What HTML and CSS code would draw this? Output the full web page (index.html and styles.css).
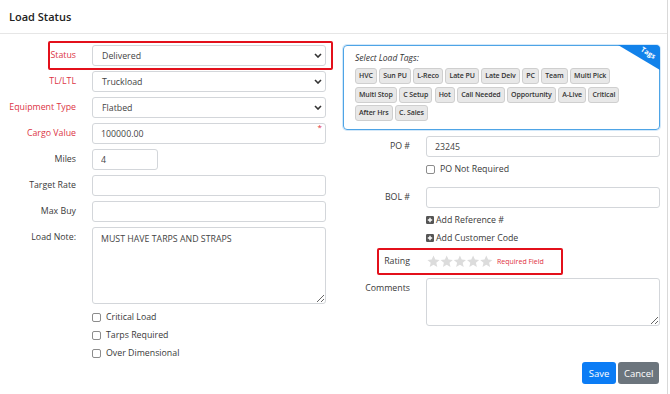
FILE: index.html
```html
<!DOCTYPE html>
<html lang="en">
  <head>
    <meta charset="UTF-8" />
    <meta name="viewport" content="width=device-width, initial-scale=1.0" />
    <title>Load Status</title>
    <link rel="stylesheet" href="styles.css">
  </head>
  <body>
    <div class="modal">
      <div class="modal-header">
        <h5>Load Status</h5>
      </div>

      <div class="modal-body">
        <div class="col-left">
          <div class="row marked">
            <label class="req">Status</label>
            <div class="control select">
              <span>Delivered</span>
              <svg class="chev" width="8" height="5" viewBox="0 0 8 5"><path d="M1 1l3 3 3-3" /></svg>
            </div>
          </div>
          <div class="row">
            <label class="req">TL/LTL</label>
            <div class="control select">
              <span>Truckload</span>
              <svg class="chev" width="8" height="5" viewBox="0 0 8 5"><path d="M1 1l3 3 3-3" /></svg>
            </div>
          </div>
          <div class="row">
            <label class="req">Equipment Type</label>
            <div class="control select">
              <span>Flatbed</span>
              <svg class="chev" width="8" height="5" viewBox="0 0 8 5"><path d="M1 1l3 3 3-3" /></svg>
            </div>
          </div>
          <div class="row">
            <label class="req">Cargo Value</label>
            <div class="field">
              <input class="control" type="text" value="100000.00" />
              <span class="star-req">*</span>
            </div>
          </div>
          <div class="row">
            <label>Miles</label>
            <input class="control short" type="text" value="4" />
          </div>
          <div class="row">
            <label>Target Rate</label>
            <input class="control" type="text" value="" />
          </div>
          <div class="row">
            <label>Max Buy</label>
            <input class="control" type="text" value="" />
          </div>
          <div class="row">
            <label>Load Note:</label>
            <textarea class="control note">MUST HAVE TARPS AND STRAPS</textarea>
          </div>

          <div class="checks">
            <label class="check"><input type="checkbox" /> Critical Load</label>
            <label class="check"><input type="checkbox" /> Tarps Required</label>
            <label class="check"><input type="checkbox" /> Over Dimensional</label>
          </div>
        </div>

        <div class="col-right">
          <div class="tags-box">
            <div class="tags-title">Select Load Tags:</div>
            <div class="tags">
              <span class="tag">HVC</span>
              <span class="tag">Sun PU</span>
              <span class="tag">L-Reco</span>
              <span class="tag">Late PU</span>
              <span class="tag">Late Delv</span>
              <span class="tag">PC</span>
              <span class="tag">Team</span>
              <span class="tag">Multi Pick</span>
              <span class="tag">Multi Stop</span>
              <span class="tag">C Setup</span>
              <span class="tag">Hot</span>
              <span class="tag">Call Needed</span>
              <span class="tag">Opportunity</span>
              <span class="tag">A-Live</span>
              <span class="tag">Critical</span>
              <span class="tag">After Hrs</span>
              <span class="tag">C. Sales</span>
            </div>
            <svg class="ribbon" width="42" height="25" viewBox="0 0 42 25">
              <path d="M0 0H38Q42 0 42 4V25Z" fill="#1282ea" />
              <text x="29" y="10" transform="rotate(32 29 10)" text-anchor="middle">Tags</text>
            </svg>
          </div>

          <div class="row po">
            <label>PO #</label>
            <input class="control" type="text" value="23245" />
          </div>
          <div class="row">
            <span></span>
            <label class="check"><input type="checkbox" /> PO Not Required</label>
          </div>
          <div class="row bol">
            <label>BOL #</label>
            <input class="control" type="text" value="" />
          </div>
          <div class="row">
            <span></span>
            <div class="links">
              <a class="add"><svg width="8" height="8" viewBox="0 0 8 8"><rect width="8" height="8" rx="1.2" fill="#555" /><path d="M4 1.8v4.4M1.8 4h4.4" stroke="#fff" stroke-width="1.4" /></svg>Add Reference #</a>
              <a class="add"><svg width="8" height="8" viewBox="0 0 8 8"><rect width="8" height="8" rx="1.2" fill="#555" /><path d="M4 1.8v4.4M1.8 4h4.4" stroke="#fff" stroke-width="1.4" /></svg>Add Customer Code</a>
            </div>
          </div>
          <div class="row rating marked">
            <label>Rating</label>
            <div class="stars">
              <svg width="66" height="13" viewBox="0 0 66 13">
                <path id="s" d="M6.5 0.5l1.8 4 4.3.4-3.3 2.9 1 4.2-3.8-2.3-3.8 2.3 1-4.2-3.3-2.9 4.3-.4z" fill="#dcdcdc" />
                <use href="#s" x="13.2" />
                <use href="#s" x="26.4" />
                <use href="#s" x="39.6" />
                <use href="#s" x="52.8" />
              </svg>
              <span class="req-note">Required Field</span>
            </div>
          </div>
          <div class="row comments">
            <label>Comments</label>
            <textarea class="control comment-box"></textarea>
          </div>

          <div class="actions">
            <button class="btn save">Save</button>
            <button class="btn cancel">Cancel</button>
          </div>
        </div>
      </div>
    </div>
  </body>
</html>
```

FILE: styles.css
```css
* {
  box-sizing: border-box;
}

body {
  margin: 0;
  font-family: "Open Sans", "Noto Sans", Arial, sans-serif;
  font-size: 8.8px;
  color: #333;
  background-color: #fff;
}

.modal {
  width: 668px;
  height: 394px;
  border-right: 1px solid #d9d9d9;
}

.modal-header {
  height: 34px;
  padding-left: 9px;
  border-bottom: 1px solid #e6e6e6;
  display: flex;
  align-items: center;
}

.modal-header h5 {
  margin: 0;
  font-size: 11px;
  font-weight: 600;
  color: #222;
}

.modal-body {
  display: flex;
  gap: 17px;
  padding-top: 11px;
}

.col-left {
  width: 326px;
}

.col-right {
  width: 317px;
}

.row {
  position: relative;
  display: grid;
  grid-template-columns: 76px 1fr;
  column-gap: 16px;
  align-items: start;
  margin-bottom: 5px;
}

.col-right .row {
  grid-template-columns: 67px 1fr;
  margin-bottom: 0;
}

.row > label {
  text-align: right;
  line-height: 21px;
  color: #3a3a3a;
}

.row > label.req {
  color: #dc3545;
}

/* red annotation boxes */
.marked::before {
  content: "";
  position: absolute;
  left: 48px;
  right: -7px;
  top: -4px;
  bottom: -4px;
  border: 2px solid #e3101b;
  border-radius: 2px;
}

.control {
  width: 100%;
  height: 21px;
  padding: 0 8px;
  border: 1px solid #d3d6da;
  border-radius: 3px;
  font: inherit;
  color: #444;
  background-color: #fff;
  outline: none;
}

.select {
  display: flex;
  align-items: center;
  justify-content: space-between;
  padding-left: 9px;
  padding-right: 3px;
}

.chev {
  fill: none;
  stroke: #333;
  stroke-width: 1.6;
}

.field {
  position: relative;
}

.star-req {
  position: absolute;
  right: 4px;
  top: 0;
  color: #e0303e;
  font-size: 8px;
  line-height: 8px;
}

.control.short {
  width: 66px;
}

.note {
  height: 77px;
  padding-top: 5px;
  resize: vertical;
  display: block;
}

.checks {
  margin-left: 92px;
  margin-top: -1px;
}

.check {
  display: flex;
  align-items: center;
  gap: 5px;
  height: 18px;
  color: #3a3a3a;
}

.check input {
  appearance: none;
  width: 9px;
  height: 9px;
  margin: 0;
  border: 1px solid #8c8c8c;
  border-radius: 2px;
}

.tags-box {
  position: relative;
  height: 85px;
  padding: 5px 36px 0 11px;
  border: 1px solid #4ea4e6;
  border-radius: 4px;
  box-shadow: 0 0 0 1px rgba(78, 164, 230, 0.25);
  margin-bottom: 6px;
}

.tags-title {
  font-style: italic;
  font-size: 8.5px;
  line-height: 13px;
  margin-bottom: 4px;
}

.tags {
  display: flex;
  flex-wrap: wrap;
  gap: 2.5px 2.5px;
}

.tag {
  height: 16px;
  padding: 0 3px;
  border: 1px solid #cfcfcf;
  border-radius: 3px;
  background-color: #e8e8e8;
  font-size: 7px;
  font-weight: 600;
  letter-spacing: -0.1px;
  line-height: 14px;
  color: #333;
}

.ribbon {
  position: absolute;
  top: -1px;
  right: -1px;
}

.ribbon text {
  fill: #fff;
  font-size: 7px;
  font-weight: 700;
}

.col-right .check {
  height: 20px;
  margin-top: 2px;
}

.bol {
  margin-top: 8px;
}

.links {
  padding-top: 3px;
}

.add {
  display: flex;
  align-items: center;
  gap: 2px;
  height: 18px;
  color: #3a3a3a;
}

.rating {
  margin-top: 4px;
  height: 20px;
}

.rating > label {
  line-height: 20px;
}

.rating.marked::before {
  left: 34px;
  right: 97px;
  top: -3px;
  bottom: -4px;
}

.stars {
  display: flex;
  align-items: center;
  height: 20px;
  gap: 4px;
  padding-left: 1px;
}

.req-note {
  color: #e0303e;
  font-size: 7px;
}

.comments {
  margin-top: 7px;
}

.comment-box {
  height: 48px;
  resize: vertical;
  display: block;
}

.actions {
  display: flex;
  justify-content: flex-end;
  gap: 2px;
  margin-top: 36px;
  padding-right: 1px;
}

.btn {
  height: 22px;
  padding: 0 6px;
  border: none;
  border-radius: 3px;
  font: inherit;
  font-size: 9.5px;
  color: white;
  cursor: pointer;
}

.save {
  background-color: #0b7cf5;
  width: 34px;
}

.cancel {
  background-color: #6c757d;
  width: 41px;
}
```
